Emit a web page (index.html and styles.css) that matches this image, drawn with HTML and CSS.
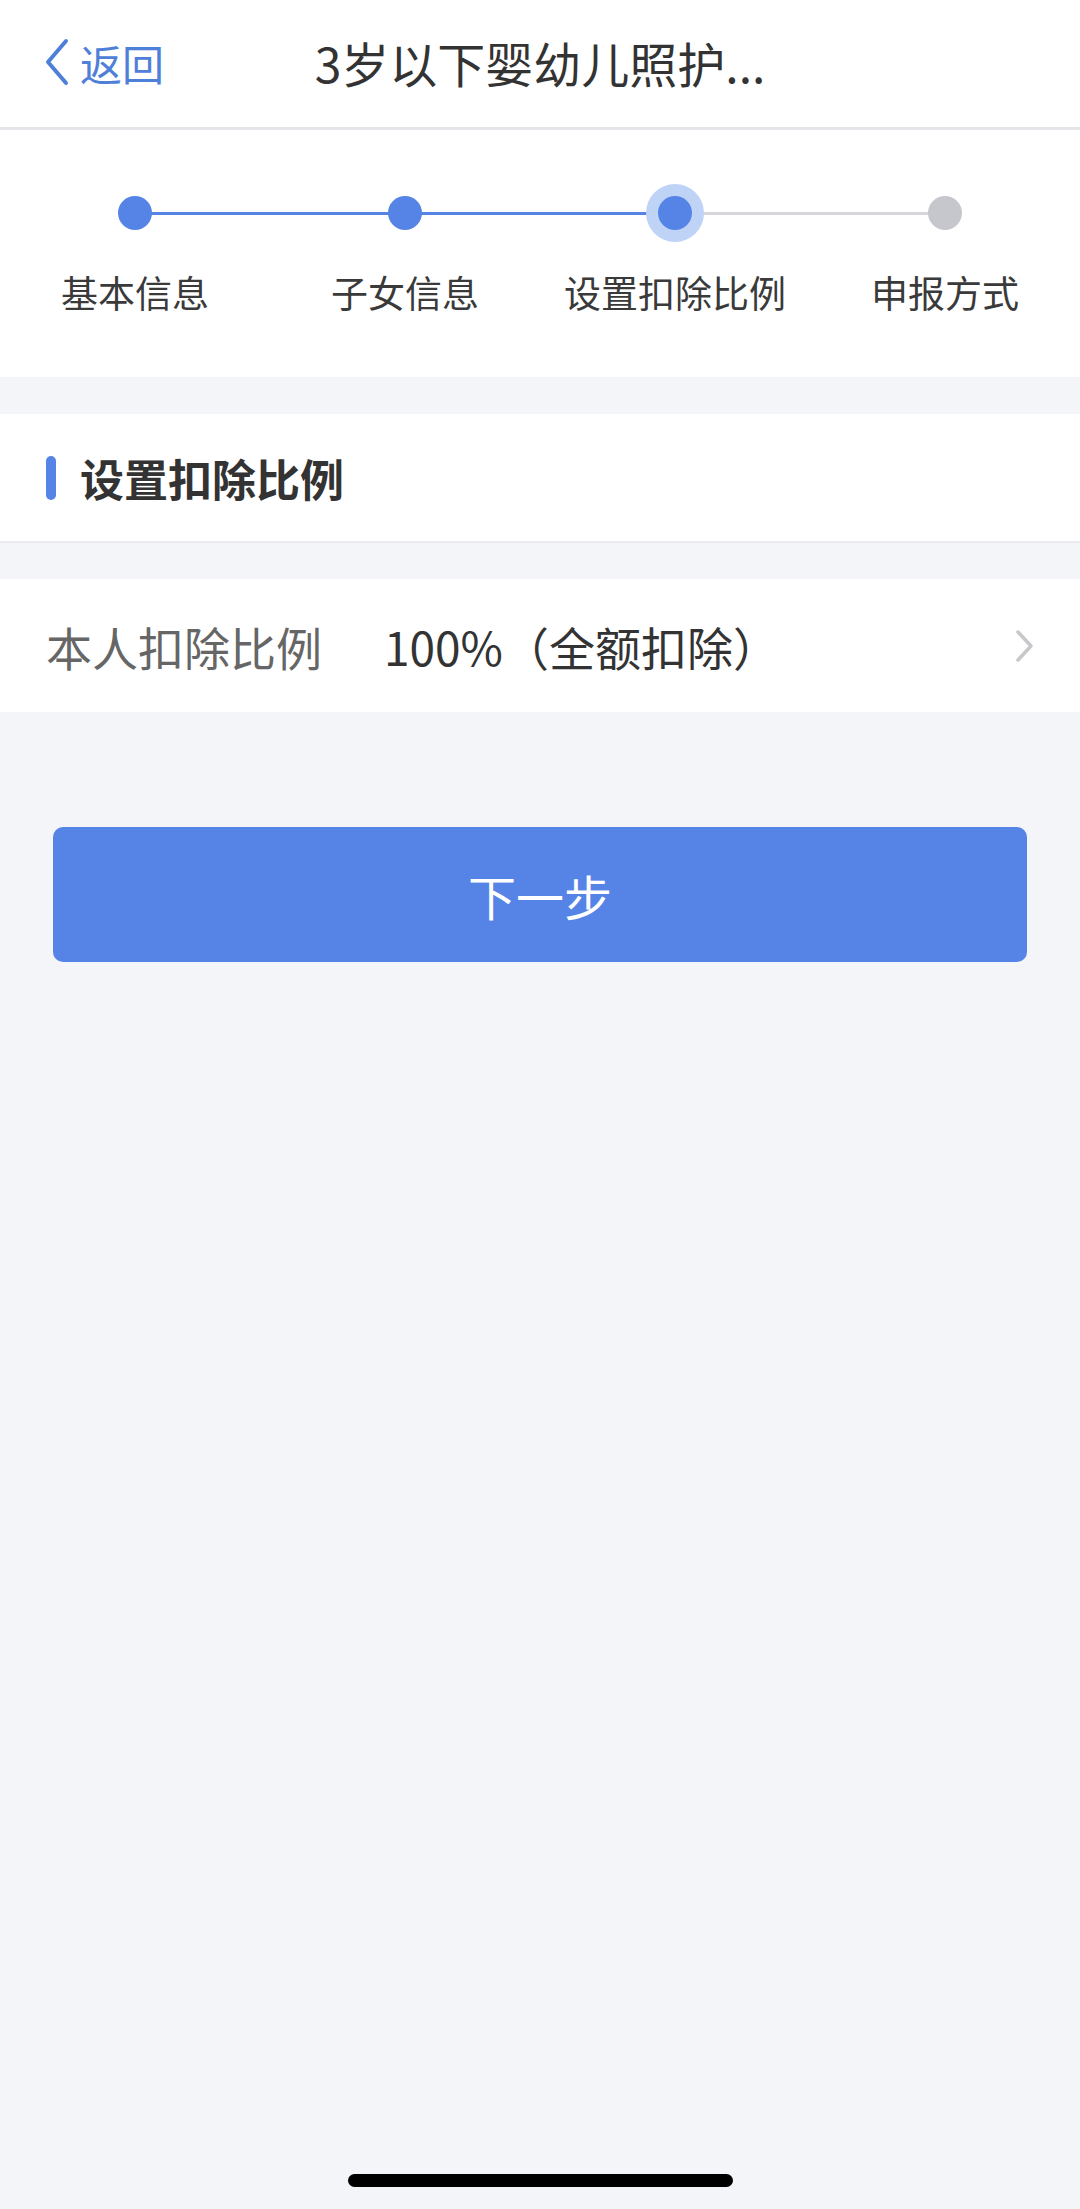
FILE: index.html
```html
<!doctype html>
<html>
<head>
  <meta charset="utf-8">
  <title>3岁以下婴幼儿照护</title>
  <link rel="stylesheet" href="styles.css">
</head>
<body>
  <header class="navbar">
    <a class="back" href="#">
      <svg width="26" height="48" viewBox="0 0 26 48">
        <path d="M22 3 L4 24 L22 45" fill="none" stroke="#4f80d9" stroke-width="4" stroke-linecap="round" stroke-linejoin="round"/>
      </svg>
      <span>返回</span>
    </a>
    <h1>3岁以下婴幼儿照护...</h1>
    <div></div>
  </header>

  <!-- Progress of the declaration flow -->
  <section class="steps">
    <div class="step done">
      <div class="track"><i class="line right on"></i><span class="dot"></span></div>
      <p>基本信息</p>
    </div>
    <div class="step done">
      <div class="track"><i class="line left on"></i><i class="line right on"></i><span class="dot"></span></div>
      <p>子女信息</p>
    </div>
    <div class="step current">
      <div class="track"><i class="line left on"></i><i class="line right"></i><span class="dot"></span></div>
      <p>设置扣除比例</p>
    </div>
    <div class="step todo">
      <div class="track"><i class="line left"></i><span class="dot"></span></div>
      <p>申报方式</p>
    </div>
  </section>

  <section class="section-head">
    <span class="bar"></span>
    <h2>设置扣除比例</h2>
  </section>

  <a class="row" href="#">
    <span class="label">本人扣除比例</span>
    <span class="value">100%（全额扣除）</span>
    <svg class="arrow" width="22" height="34" viewBox="0 0 22 34">
      <path d="M4 3 L17 17 L4 31" fill="none" stroke="#c8c8cc" stroke-width="3.5" stroke-linecap="round" stroke-linejoin="round"/>
    </svg>
  </a>

  <button class="next">下一步</button>

  <div class="home-bar"></div>
</body>
</html>
```

FILE: styles.css
```css
* {
  box-sizing: border-box;
  margin: 0;
  padding: 0;
}

body {
  display: flex;
  flex-direction: column;
  min-height: 2209px;
  background: #f4f5f9;
  color: #333;
  font-family: "Noto Sans CJK SC", "Noto Sans", sans-serif;
}

a { text-decoration: none; }

/* top bar */
.navbar {
  display: grid;
  grid-template-columns: 1fr auto 1fr;
  align-items: center;
  height: 130px;
  padding-bottom: 3px;
  background: #fff;
  border-bottom: 3px solid #e4e5e8;
}

.back {
  display: flex;
  align-items: center;
  padding-left: 44px;
  color: #4f80d9;
  font-size: 42px;
}

.back svg { margin-right: 10px; }

.navbar h1 {
  font-size: 48px;
  font-weight: 400;
  color: #333;
}

/* steps */
.steps {
  display: grid;
  grid-template-columns: repeat(4, 1fr);
  background: #fff;
  padding: 66px 0 57px;
}

.step {
  display: flex;
  flex-direction: column;
  align-items: center;
}

.track {
  position: relative;
  width: 100%;
  height: 34px;
  display: flex;
  justify-content: center;
  align-items: center;
}

.line {
  position: absolute;
  top: 16px;
  height: 3px;
  width: 50%;
  background: #d6d7da;
}

.line.left { left: 0; }
.line.right { right: 0; }
.line.on { background: #5584e6; }

.dot {
  position: relative;
  width: 34px;
  height: 34px;
  border-radius: 50%;
  background: #5584e6;
}

.current .dot { box-shadow: 0 0 0 12px #bfd3f6; }
.todo .dot { background: #c6c7cc; }

.step p {
  margin-top: 34px;
  font-size: 37px;
  line-height: 56px;
  color: #3a3a3a;
}

/* section title */
.section-head {
  display: flex;
  align-items: center;
  height: 129px;
  margin-top: 37px;
  padding-left: 46px;
  background: #fff;
  border-bottom: 2px solid #ebecef;
}

.bar {
  width: 10px;
  height: 44px;
  border-radius: 5px;
  background: #5584e6;
  margin-right: 24px;
}

.section-head h2 {
  font-size: 44px;
  font-weight: 700;
  color: #333;
}

/* list row */
.row {
  display: flex;
  align-items: center;
  height: 133px;
  margin-top: 36px;
  padding: 0 46px 0 46px;
  background: #fff;
  font-size: 46px;
}

.row .label {
  color: #666;
  margin-right: 62px;
}

.row .value {
  flex: 1;
  color: #333;
}

.arrow { margin-right: -2px; }

/* primary button */
.next {
  margin: 115px 53px 0;
  height: 135px;
  border: none;
  border-radius: 10px;
  background: #5584e6;
  color: #fff;
  font-family: "Noto Sans CJK SC", sans-serif;
  font-size: 48px;
  cursor: pointer;
}

.home-bar {
  align-self: center;
  width: 385px;
  height: 13px;
  margin-top: auto;
  margin-bottom: 22px;
  border-radius: 7px;
  background: #000;
}
```
